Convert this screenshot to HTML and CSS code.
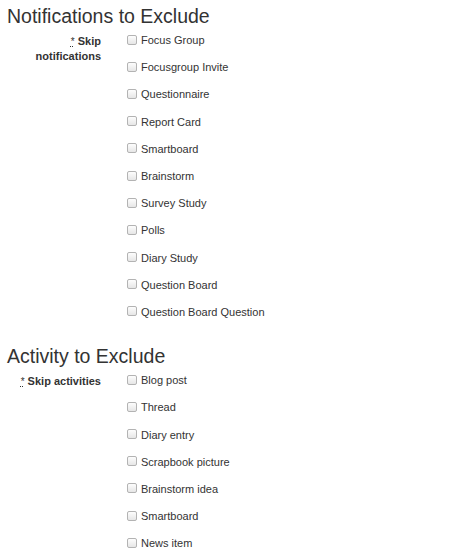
FILE: index.html
```html
<!DOCTYPE html>
<html lang="en">
<head>
    <meta charset="UTF-8">
    <meta name="viewport" content="width=device-width, initial-scale=1.0">
    <title>Exclude settings</title>
    <link rel="stylesheet" href="styles.css">
</head>
<body>
    <form class="mform">
        <!-- Notifications -->
        <fieldset class="section">
            <h3 class="section-title">Notifications to Exclude</h3>
            <div class="fitem">
                <div class="fitemtitle">
                    <label><abbr class="req" title="Required">*</abbr> Skip notifications</label>
                </div>
                <div class="felement">
                    <label class="opt"><input type="checkbox"> Focus Group</label>
                    <label class="opt"><input type="checkbox"> Focusgroup Invite</label>
                    <label class="opt"><input type="checkbox"> Questionnaire</label>
                    <label class="opt"><input type="checkbox"> Report Card</label>
                    <label class="opt"><input type="checkbox"> Smartboard</label>
                    <label class="opt"><input type="checkbox"> Brainstorm</label>
                    <label class="opt"><input type="checkbox"> Survey Study</label>
                    <label class="opt"><input type="checkbox"> Polls</label>
                    <label class="opt"><input type="checkbox"> Diary Study</label>
                    <label class="opt"><input type="checkbox"> Question Board</label>
                    <label class="opt"><input type="checkbox"> Question Board Question</label>
                </div>
            </div>
        </fieldset>

        <!-- Activities -->
        <fieldset class="section">
            <h3 class="section-title">Activity to Exclude</h3>
            <div class="fitem">
                <div class="fitemtitle">
                    <label><abbr class="req" title="Required">*</abbr> Skip activities</label>
                </div>
                <div class="felement">
                    <label class="opt"><input type="checkbox"> Blog post</label>
                    <label class="opt"><input type="checkbox"> Thread</label>
                    <label class="opt"><input type="checkbox"> Diary entry</label>
                    <label class="opt"><input type="checkbox"> Scrapbook picture</label>
                    <label class="opt"><input type="checkbox"> Brainstorm idea</label>
                    <label class="opt"><input type="checkbox"> Smartboard</label>
                    <label class="opt"><input type="checkbox"> News item</label>
                </div>
            </div>
        </fieldset>
    </form>
</body>
</html>
```

FILE: styles.css
```css
/* base */
body {
    margin: 0;
    font-family: "Liberation Sans", Arial, sans-serif;
    font-size: 11px;
    color: #333;
    background: #fff;
}

.mform {
    padding-left: 7px;
}

.section {
    border: none;
    margin: 0;
    padding: 0;
}

.section + .section {
    margin-top: 14px;
}

.section-title {
    font-size: 19.5px;
    font-weight: normal;
    line-height: 22px;
    margin: 5px 0 0;
    color: #333;
}

/* form rows */
.fitem {
    display: flex;
}

.fitemtitle {
    width: 86px;
    padding: 7px 0 0 8px;
    text-align: right;
    font-weight: bold;
    line-height: 14px;
}

.req {
    font-size: 10px;
    font-weight: normal;
    text-decoration: underline dotted;
}

.felement {
    display: flex;
    flex-direction: column;
    margin-left: 26px;
}

.opt {
    display: flex;
    align-items: center;
    line-height: 27px;
    height: 27.2px;
}

.opt input[type="checkbox"] {
    appearance: none;
    -webkit-appearance: none;
    width: 10px;
    height: 10px;
    margin: -2px 4px 0 0;
    border: 1px solid #b3b3b3;
    border-radius: 2px;
    background: linear-gradient(#fdfdfd, #e6e6e6);
    box-sizing: border-box;
}
```
